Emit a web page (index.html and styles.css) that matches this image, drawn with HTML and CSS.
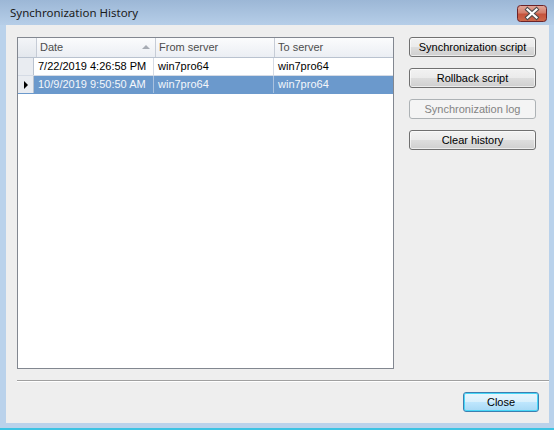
FILE: index.html
```html
<!DOCTYPE html>
<html>
<head>
  <title>Synchronization History</title>
  <link rel="stylesheet" href="styles.css">
</head>
<body>
  <div class="window">
    <div class="title-bar">
      <span class="title-text">Synchronization History</span>
      <div class="title-close">
        <svg width="30" height="17" viewBox="0 0 30 17">
          <defs>
            <linearGradient id="red" x1="0" y1="0" x2="0" y2="1">
              <stop offset="0" stop-color="#e2a99c"/>
              <stop offset="0.45" stop-color="#d47e6b"/>
              <stop offset="0.55" stop-color="#c5533c"/>
              <stop offset="1" stop-color="#cf6a4c"/>
            </linearGradient>
          </defs>
          <rect x="0.5" y="0.5" width="29" height="16" rx="3" fill="url(#red)" stroke="#6b2328"/>
          <path d="M10.5 4.5 L19.5 12.5 M19.5 4.5 L10.5 12.5" stroke="#4a4a4a" stroke-width="4.2" stroke-linecap="square"/>
          <path d="M10.5 4.5 L19.5 12.5 M19.5 4.5 L10.5 12.5" stroke="#ffffff" stroke-width="2.2" stroke-linecap="square"/>
        </svg>
      </div>
    </div>

    <div class="client">
      <div class="main-area">
        <div class="grid">
          <div class="grid-row grid-header">
            <div class="cell row-head"></div>
            <div class="cell col-date">Date<span class="sort-arrow"></span></div>
            <div class="cell col-from">From server</div>
            <div class="cell col-to">To server</div>
          </div>
          <div class="grid-row">
            <div class="cell row-head"></div>
            <div class="cell col-date">7/22/2019 4:26:58 PM</div>
            <div class="cell col-from">win7pro64</div>
            <div class="cell col-to">win7pro64</div>
          </div>
          <div class="grid-row selected">
            <div class="cell row-head"><span class="row-arrow"></span></div>
            <div class="cell col-date">10/9/2019 9:50:50 AM</div>
            <div class="cell col-from">win7pro64</div>
            <div class="cell col-to">win7pro64</div>
          </div>
        </div>

        <div class="side-buttons">
          <button class="btn">Synchronization script</button>
          <button class="btn">Rollback script</button>
          <button class="btn" disabled>Synchronization log</button>
          <button class="btn">Clear history</button>
        </div>
      </div>

      <div class="separator"></div>

      <div class="footer">
        <button class="btn btn-default">Close</button>
      </div>
    </div>
    <div class="bottom-edge"></div>
  </div>
</body>
</html>
```

FILE: styles.css
```css
body {
  margin: 0;
  background: #bcd3ec;
  font-family: "Liberation Sans", Arial, sans-serif;
  font-size: 11px;
  color: #000;
}

.window {
  width: 554px;
  height: 430px;
  display: flex;
  flex-direction: column;
  background: #bad2eb;
}

/* title bar */
.title-bar {
  height: 25px;
  display: flex;
  align-items: flex-start;
  background: linear-gradient(#9cb7d6, #b6cee8);
}
.title-text {
  margin: 5px 0 0 10px;
  font-family: "Noto Sans", "Open Sans", sans-serif;
  font-size: 11.5px;
  color: #1b1b1b;
  flex-grow: 1;
}
.title-close {
  margin: 5px 7px 0 0;
  height: 17px;
}
.title-close svg {
  display: block;
}

/* client area */
.client {
  margin: 0 5px 0 6px;
  height: 398px;
  background: #eeeeee;
  display: flex;
  flex-direction: column;
}

.main-area {
  display: flex;
  padding: 12px 13px 0 11px;
  gap: 15px;
}

/* data grid */
.grid {
  width: 375px;
  height: 330px;
  border: 1px solid #828790;
  background: #fff;
}
.grid-row {
  display: flex;
  height: 17px;
  border-bottom: 1px solid #d5dbe5;
}
.grid-header {
  height: 19px;
  border-bottom: 1px solid #b9c2cf;
  background: linear-gradient(#fbfcfd, #ebeef3);
  color: #4d4d4d;
}
.cell {
  border-right: 1px solid #d5dbe5;
  padding-left: 4px;
  line-height: 17px;
  white-space: nowrap;
  overflow: hidden;
  position: relative;
}
.grid-header .cell {
  line-height: 19px;
  padding-left: 3px;
  border-right-color: #c6ccd6;
}
.row-head {
  width: 15px;
  padding: 0;
  background: #e9ecf1;
  border-right-color: #b9c2cf;
}
.grid-header .row-head {
  background: linear-gradient(#f3f5f8, #e3e7ed);
}
.col-date { width: 115px; }
.col-from { width: 115px; }
.col-to {
  flex-grow: 1;
  border-right: none;
}

.selected .cell {
  background: #6b99cc;
  color: #f4f7fb;
  border-right-color: #a9c2e0;
}
.selected .row-head {
  background: #e9ecf1;
  border-right-color: #b9c2cf;
}
.selected {
  border-bottom-color: #6b99cc;
}

.sort-arrow {
  position: absolute;
  right: 5px;
  top: 7px;
  width: 0;
  height: 0;
  border-left: 4px solid transparent;
  border-right: 4px solid transparent;
  border-bottom: 4px solid #a7acb4;
}
.row-arrow {
  position: absolute;
  left: 6px;
  top: 5px;
  width: 0;
  height: 0;
  border-top: 4px solid transparent;
  border-bottom: 4px solid transparent;
  border-left: 4px solid #000;
}

/* buttons */
.side-buttons {
  display: flex;
  flex-direction: column;
  gap: 11px;
}
.btn {
  width: 127px;
  height: 20px;
  padding: 0;
  font-family: "Liberation Sans", Arial, sans-serif;
  font-size: 11px;
  color: #000;
  border: 1px solid #707070;
  border-radius: 3px;
  background: linear-gradient(#f2f2f2 0%, #ebebeb 48%, #dddddd 52%, #cfcfcf 100%);
  box-shadow: inset 0 0 0 1px rgba(255, 255, 255, 0.6);
}
.btn:disabled {
  color: #838383;
  border-color: #adb2b5;
  background: #f4f4f4;
  box-shadow: none;
}

.separator {
  margin: 11px 0 0 11px;
  height: 1px;
  border-top: 1px solid #a0a0a0;
  background: #fff;
}

.footer {
  display: flex;
  justify-content: flex-end;
  padding: 10px 10px 0 0;
}
.btn-default {
  width: 76px;
  border-color: #3c7fb1;
  background: linear-gradient(#eaf6fd 0%, #d9f0fc 48%, #bee6fd 52%, #a7d9f5 100%);
  box-shadow: inset 0 0 0 1px #48d7f7;
}

.bottom-edge {
  margin-top: auto;
  height: 2px;
  background: #3bc3e3;
}
```
